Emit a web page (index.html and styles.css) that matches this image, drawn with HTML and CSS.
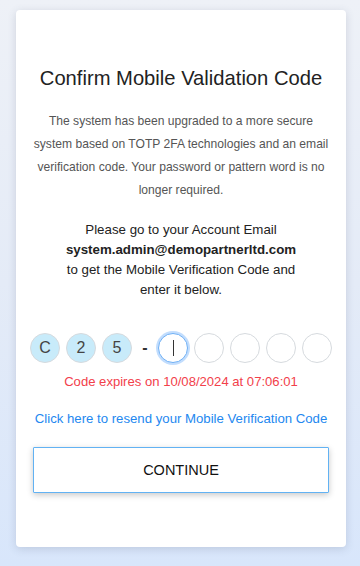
FILE: index.html
```html
<!DOCTYPE html>
<html lang="en">
<head>
<meta charset="utf-8">
<title>Confirm Mobile Validation Code</title>
<link rel="stylesheet" href="styles.css">
</head>
<body>
<main class="card">
  <h1 class="title">Confirm Mobile Validation Code</h1>
  <p class="info">The system has been upgraded to a more secure system based on TOTP 2FA technologies and an email verification code. Your password or pattern word is no longer required.</p>
  <p class="instr">Please go to your Account Email<br><strong>system.admin@demopartnerltd.com</strong><br>to get the Mobile Verification Code and enter it below.</p>
  <div class="code">
    <span class="cell filled">C</span>
    <span class="cell filled">2</span>
    <span class="cell filled">5</span>
    <span class="dash">-</span>
    <span class="cell active"><span class="caret"></span></span>
    <span class="cell"></span>
    <span class="cell"></span>
    <span class="cell"></span>
    <span class="cell"></span>
  </div>
  <p class="expires">Code expires on 10/08/2024 at 07:06:01</p>
  <a class="resend" href="#">Click here to resend your Mobile Verification Code</a>
  <button class="continue" type="button">CONTINUE</button>
</main>
</body>
</html>
```
FILE: styles.css
```css
html, body {
  margin: 0;
  padding: 0;
}
body {
  width: 360px;
  height: 566px;
  box-sizing: border-box;
  padding: 10px 14px 19px 16px;
  font-family: "Liberation Sans", Arial, sans-serif;
  background: linear-gradient(180deg, #eef1f7 0%, #e4ebf7 50%, #d8e6fb 100%);
  overflow: hidden;
}
.card {
  background: #fff;
  border-radius: 4px;
  box-shadow: 0 2px 8px rgba(60, 70, 100, 0.18);
  height: 537px;
  box-sizing: border-box;
  padding: 56px 14px 0 14px;
  display: flex;
  flex-direction: column;
  align-items: center;
  text-align: center;
}
.title {
  margin: 0;
  font-weight: normal;
  font-size: 20.2px;
  line-height: 24px;
  color: #222;
}
.info {
  margin: 20px 0 0 0;
  font-size: 12.1px;
  line-height: 23px;
  color: #555;
  width: 300px;
}
.instr {
  margin: 18px 0 0 0;
  font-size: 13.3px;
  line-height: 20px;
  color: #222;
  width: 250px;
}
.instr strong {
  font-weight: bold;
}
.code {
  margin-top: 33px;
  display: flex;
  align-items: center;
  gap: 6px;
}
.cell {
  width: 30px;
  height: 30px;
  box-sizing: border-box;
  border: 1px solid #d6dade;
  border-radius: 50%;
  display: flex;
  align-items: center;
  justify-content: center;
  font-size: 16px;
  color: #444;
  background: #fff;
}
.cell.filled {
  background: #c8ebfa;
}
.cell.active {
  border: 1px solid #6fb0f5;
  box-shadow: 0 0 0 2px rgba(120, 180, 250, 0.45);
}
.caret {
  width: 1px;
  height: 16px;
  background: #333;
}
.dash {
  width: 14px;
  text-align: center;
  font-size: 16px;
  font-weight: bold;
  color: #333;
}
.expires {
  margin: 9px 0 0 0;
  font-size: 13.1px;
  line-height: 20px;
  color: #f2404a;
}
.resend {
  margin-top: 17px;
  font-size: 13.2px;
  line-height: 20px;
  color: #2388f0;
  text-decoration: none;
}
.continue {
  margin-top: 18px;
  width: 296px;
  height: 46px;
  background: #fff;
  border: 1px solid #62b2f3;
  border-radius: 1px;
  box-shadow: 0 2px 6px rgba(0, 0, 0, 0.22);
  font-family: "Liberation Sans", Arial, sans-serif;
  font-size: 14.5px;
  color: #111;
  cursor: pointer;
}
```
